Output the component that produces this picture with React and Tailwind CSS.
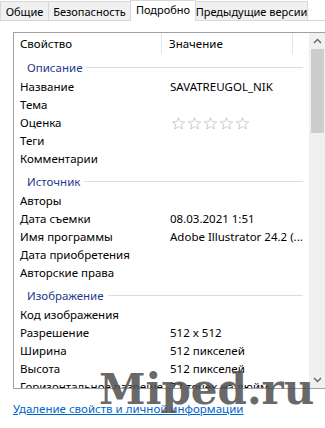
import React from "react";

const Chevron = ({ up }) => (
  <svg width="9" height="6" viewBox="0 0 9 6" className="block">
    {up ? (
      <polyline points="1,5 4.5,1.5 8,5" fill="none" stroke="#606060" strokeWidth="1.3" />
    ) : (
      <polyline points="1,1 4.5,4.5 8,1" fill="none" stroke="#606060" strokeWidth="1.3" />
    )}
  </svg>
);

const Star = () => (
  <svg width="15" height="15" viewBox="0 0 24 24" className="block">
    <polygon
      points="12,2.5 14.8,9 21.8,9.4 16.4,13.9 18.1,20.8 12,17 5.9,20.8 7.6,13.9 2.2,9.4 9.2,9"
      fill="none"
      stroke="#c4c4c4"
      strokeWidth="1.4"
      strokeLinejoin="round"
    />
  </svg>
);

const Group = ({ title }) => (
  <div className="h-[24px] flex items-center pt-[3px] pl-[13px] pr-[6px] shrink-0">
    <span className="text-[#1e3a8a] leading-[18px]">{title}</span>
    <div className="flex-1 h-px bg-[#d9dde3] ml-[4px]" />
  </div>
);

const Row = ({ name, value, children }) => (
  <div className="h-[18px] flex items-center shrink-0 whitespace-nowrap leading-[18px]">
    <div className="w-[149px] pl-[6px] pr-[4px] shrink-0 overflow-hidden">{name}</div>
    <div className="pl-[7px] flex items-center">{children || value}</div>
  </div>
);

const tabBase = "h-[19px] -ml-px border border-b-0 border-[#d9d9d9] bg-[#f0f0f0] flex items-center justify-center whitespace-nowrap shrink-0 pt-[1px] leading-[16px] text-[11px]";

export default function App() {
  return (
    <div className="w-[325px] h-[428px] bg-white relative overflow-hidden font-['Noto_Sans',sans-serif] text-[11.5px] text-black leading-none">
      {/* Tabs */}
      <div className="h-[21px] flex items-end border-b border-[#d9d9d9]">
        <div className={tabBase + " ml-0 w-[49px]"}>Общие</div>
        <div className={tabBase + " w-[83px]"}>Безопасность</div>
        <div className="-ml-px w-[66px] h-[21px] -mb-px border border-b-0 border-[#d9d9d9] bg-white flex items-center justify-center whitespace-nowrap shrink-0 pb-[2px] leading-[16px] text-[11px] relative z-10">
          Подробно
        </div>
        <div className={tabBase + " w-[113px]"}>Предыдущие версии</div>
      </div>

      {/* List box */}
      <div className="ml-[13px] mt-[11px] h-[357px] border border-r-0 border-[#a0a0a0] flex">
        <div className="w-[295px] flex flex-col overflow-hidden">
          <div className="h-[21px] flex shrink-0 leading-[16px]">
            <div className="w-[148px] border-r border-[#e5e5e5] flex items-center pl-[6px]">Свойство</div>
            <div className="w-[131px] border-r border-[#e5e5e5] flex items-center pl-[7px]">Значение</div>
          </div>
          <Group title="Описание" />
          <Row name="Название" value="SAVATREUGOL_NIK" />
          <Row name="Тема" />
          <Row name="Оценка">
            <div className="flex gap-[1px] pl-[1px]">
              <Star />
              <Star />
              <Star />
              <Star />
              <Star />
            </div>
          </Row>
          <Row name="Теги" />
          <Row name="Комментарии" />
          <Group title="Источник" />
          <Row name="Авторы" />
          <Row name="Дата съемки" value="08.03.2021 1:51" />
          <Row name="Имя программы" value="Adobe Illustrator 24.2 (..." />
          <Row name="Дата приобретения" />
          <Row name="Авторские права" />
          <Group title="Изображение" />
          <Row name="Код изображения" />
          <Row name="Разрешение" value="512 x 512" />
          <Row name="Ширина" value="512 пикселей" />
          <Row name="Высота" value="512 пикселей" />
          <Row name="Горизонтальное разрешение" value="72 точек на дюйм" />
        </div>
        <div className="flex-1 bg-[#f0f0f0] flex flex-col">
          <div className="h-[16px] flex items-center justify-center">
            <Chevron up />
          </div>
          <div className="h-[84px] bg-[#cdcdcd] ml-[2px] mr-[1px]" />
          <div className="flex-1" />
          <div className="h-[16px] flex items-center justify-center">
            <Chevron />
          </div>
        </div>
      </div>

      {/* Link */}
      <div className="mt-[12px] ml-[13px] text-[#0066cc] underline leading-[16px] whitespace-nowrap">
        Удаление свойств и личной информации
      </div>

      {/* Watermark */}
      <div className="absolute left-[99px] top-[369px] font-['DejaVu_Serif',serif] font-bold text-[42px] leading-none text-[#505050] opacity-85 pointer-events-none">
        Miped.ru
      </div>
    </div>
  );
}
